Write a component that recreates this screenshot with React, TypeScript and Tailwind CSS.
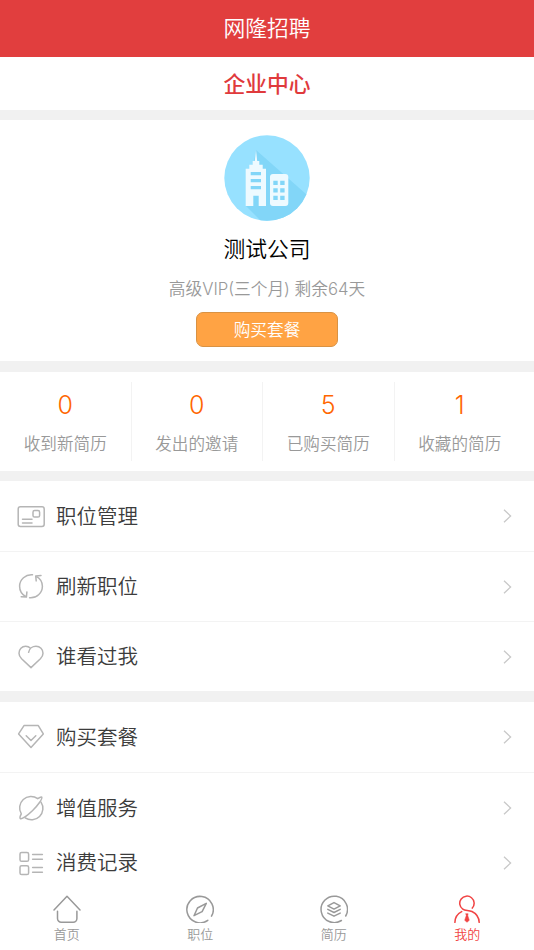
import type { ReactNode } from "react";
import clsx from "clsx";

interface IconProps {
  children: ReactNode;
  className?: string;
}

const Icon = ({ children, className }: IconProps) => (
  <svg
    viewBox="0 0 28 28"
    fill="none"
    stroke="currentColor"
    strokeWidth="1.5"
    strokeLinecap="round"
    strokeLinejoin="round"
    className={clsx("w-7 h-7 shrink-0", className)}
  >
    {children}
  </svg>
);

const stats = [
  { value: 0, label: "收到新简历" },
  { value: 0, label: "发出的邀请" },
  { value: 5, label: "已购买简历" },
  { value: 1, label: "收藏的简历" },
];

const jobMenu = [
  {
    label: "职位管理",
    className: "h-[70px]",
    icon: (
      <>
        <rect x="1.2" y="4.7" width="26" height="19.8" rx="2.2" />
        <rect x="16" y="8.6" width="6.6" height="6.4" rx="1.6" />
        <path d="M5.5 17.2H15M5.5 20.9H15" />
      </>
    ),
  },
  {
    label: "刷新职位",
    className: "h-[70px] border-t",
    icon: (
      <>
        <path d="M15.5 1.8C8.6 1.2 2.6 6.4 2.6 13.2c0 4.3 2.2 8 6 10.3M4.2 23.8l5.2.3.5-5.2" />
        <path d="M12.6 24.8C19.6 25.4 25.4 20 25.4 13.3c0-4.3-2.4-8-6.1-10M24 2.6l-5.3.3.5 5" />
      </>
    ),
  },
  {
    label: "谁看过我",
    className: "h-[70px] border-t",
    icon: (
      <path d="M11.6 9.3C12.3 5.6 15.5 3.3 19 3.3c4 0 7 3 7 6.9 0 2.2-.9 3.9-2.6 5.6L14 24.6l-9.4-8.8C2.9 14.1 2 12.4 2 10.2c0-3.9 2.9-6.9 6.7-6.9 1.9 0 3.5.7 4.8 2" />
    ),
  },
];

const serviceMenu = [
  {
    label: "购买套餐",
    className: "h-[70px]",
    icon: (
      <>
        <path d="M7 2.6h14.3l5 8.3L14 24.5 1.6 10.9z" />
        <path d="M9.2 12.8l4.8 4.7 4.8-4.7" />
      </>
    ),
  },
  {
    label: "增值服务",
    className: "h-[71px] border-t",
    icon: (
      <>
        <path d="M20.7 4.7A11.4 11.4 0 0 0 4.3 19.9C3.2 22 2.7 23.8 3.2 24.4c1.3 1.3 7.3-2.9 12.2-7.6C20.7 11.6 25.9 4.3 24.7 3.1c-.5-.4-2 .2-4 1.6z" />
        <path d="M24 8.1A11.4 11.4 0 0 1 8.2 23.9" />
      </>
    ),
  },
  {
    label: "消费记录",
    className: "h-[39px]",
    icon: (
      <>
        <rect x="3" y="3.5" width="8.6" height="8.8" rx="1.6" />
        <rect x="3" y="16.7" width="8.6" height="8.8" rx="1.6" />
        <path d="M15.6 5.5h9.8M15.6 10.3h9.8M15.6 18.6h9.8M15.6 23.2h9.8" />
      </>
    ),
  },
];

const tabs = [
  {
    label: "首页",
    icon: (
      <path d="M1 15L14 1.3 27 15M4.5 16.3v7.2a3.7 3.7 0 0 0 3.7 3.7h12a3.7 3.7 0 0 0 3.7-3.7v-7.2" />
    ),
  },
  {
    label: "职位",
    icon: (
      <>
        <path d="M21.8 25.3A13.2 13.2 0 1 1 25.5 21.2" />
        <path d="M20.3 8.3l-4.2 8.3L8 20.7l3.5-7.7z" />
      </>
    ),
  },
  {
    label: "简历",
    icon: (
      <>
        <path d="M21.4 25.5A13.2 13.2 0 1 1 25.7 21" />
        <path d="M14 7.6l6.2 3.2-6.2 3.3-6.2-3.3zM7.8 14.4L14 17.5l6.2-3.1M7.8 18.1l6.2 3.1 6.2-3.1" />
      </>
    ),
  },
  {
    label: "我的",
    active: true,
    icon: (
      <>
        <path d="M19.3 13.1A7.2 7.2 0 1 0 9.8 14.2C12 16 15.6 15 19 16.5c4.6 2.2 7 6.4 7.2 10.9M1.9 27.4c.1-4.6 2.5-8.7 6.8-10.8" />
        <path
          d="M12.9 18.7h2.2l-.3 2 1.5 4.6-2.3 2-2.3-2 1.5-4.6z"
          fill="currentColor"
          strokeWidth="0.5"
        />
      </>
    ),
  },
];

const CompanyAvatar = () => (
  <svg viewBox="0 0 86 86" className="w-[86px] h-[86px]">
    <clipPath id="avatar">
      <circle cx="43" cy="43" r="42.7" />
    </clipPath>
    <g clipPath="url(#avatar)">
      <path d="M0 0h86v86H0z" fill="#97e1ff" />
      <path d="M32 15l58 51v24H41L22 71z" fill="#82d6f8" />
    </g>
    <g fill="#eefaff">
      <path d="M32 15l1.2 11h2.1v3.7h3.4v4H42V71h-7.3V60.7h-5.4V71h-7.6V33.7h3.6v-4h3.4V26h2.1z" />
      <rect x="46" y="39" width="18.3" height="32" rx="3" />
    </g>
    <g fill="#82d6f8">
      <path d="M26.7 37H37v3.3H26.7zM26.7 44H37v3.3H26.7zM26.7 51H37v3.3H26.7z" />
      <path d="M49.3 45.7h4.4V50h-4.4zM56.2 45.7h4.4V50h-4.4zM49.3 53.2h4.4v4.3h-4.4zM56.2 53.2h4.4v4.3h-4.4zM49.3 60.7h4.4V65h-4.4zM56.2 60.7h4.4V65h-4.4z" />
    </g>
  </svg>
);

const MenuRow = ({ item }: { item: (typeof jobMenu)[number] }) => (
  <li
    className={clsx(
      "flex items-center pl-[17px] pr-[22px] border-[#f3f3f3]",
      item.className
    )}
  >
    <Icon className="text-[#b5b5b5]">{item.icon}</Icon>
    <span className="ml-[11px] flex-1 pb-[3px] text-[20.5px] leading-7 text-[#3c3c3c]">
      {item.label}
    </span>
    <svg
      viewBox="0 0 9 14"
      fill="none"
      stroke="#c8c8c8"
      strokeWidth="1.3"
      className="w-[9px] h-3.5"
    >
      <path d="M1 .8L7.6 7 1 13.2" />
    </svg>
  </li>
);

export default function App() {
  return (
    <div className="flex flex-col w-full h-[950px] overflow-hidden bg-[#f1f1f1] font-['Noto_Sans_CJK_SC',sans-serif] font-[350]">
      <header className="h-[57px] shrink-0 flex items-center justify-center pb-0.5 bg-[#e13e3e] text-white text-[21.8px]">
        网隆招聘
      </header>
      <h1 className="h-[53px] shrink-0 flex items-center justify-center pb-px bg-white text-[#e03a3c] text-[21.8px] font-medium">
        企业中心
      </h1>

      <section className="mt-2.5 h-[241px] shrink-0 flex flex-col items-center bg-white pt-[15px]">
        <CompanyAvatar />
        <h2 className="mt-[11px] text-[21.8px] leading-8 text-black">测试公司</h2>
        <p className="mt-[13px] text-[16.7px] leading-6 text-[#999] font-['Inter','Noto_Sans_CJK_SC',sans-serif]">
          高级VIP(三个月) 剩余64天
        </p>
        <button className="mt-[11px] w-[142px] h-[35px] rounded-[7px] border border-[#d99243] bg-[#ffa344] text-white text-[16.7px] leading-6 pb-px">
          购买套餐
        </button>
      </section>

      <section className="mt-[11px] h-[99px] shrink-0 flex bg-white py-2.5 pr-[9px]">
        {stats.map((stat) => (
          <div
            key={stat.label}
            className="flex-1 flex flex-col items-center border-r border-[#f3f3f3] last:border-r-0"
          >
            <span className="mt-[7px] text-[25px] leading-8 text-[#ff6600] font-['Inter',sans-serif] font-light">
              {stat.value}
            </span>
            <span className="mt-2.5 text-[16.6px] leading-6 text-[#999]">{stat.label}</span>
          </div>
        ))}
      </section>

      <ul className="mt-2.5 shrink-0 bg-white">
        {jobMenu.map((item) => (
          <MenuRow key={item.label} item={item} />
        ))}
      </ul>

      <ul className="mt-[11px] flex-1 bg-white">
        {serviceMenu.map((item) => (
          <MenuRow key={item.label} item={item} />
        ))}
      </ul>

      <nav className="h-[62px] shrink-0 flex bg-white pt-[7px]">
        {tabs.map((tab) => (
          <div
            key={tab.label}
            className={clsx(
              "flex-1 flex flex-col items-center",
              tab.active ? "text-[#f14444]" : "text-[#999]"
            )}
          >
            <Icon>{tab.icon}</Icon>
            <span className="text-[13px] leading-[21px]">{tab.label}</span>
          </div>
        ))}
      </nav>
    </div>
  );
}
